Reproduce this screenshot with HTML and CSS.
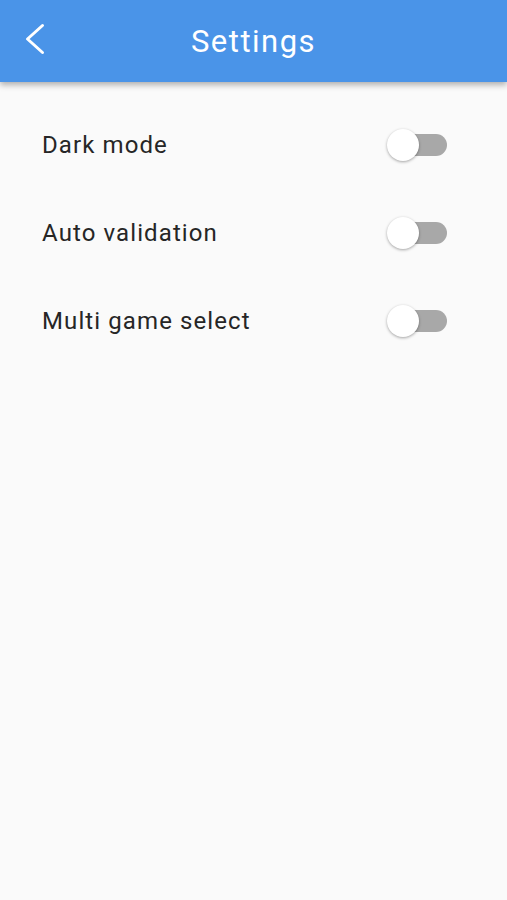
FILE: index.html
```html
<!DOCTYPE html>
<html lang="en">
<head>
    <meta charset="UTF-8">
    <meta name="viewport" content="width=device-width, initial-scale=1.0">
    <title>Settings</title>
    <link rel="stylesheet" href="styles.css">
</head>
<body>
    <div id="appBar">
        <button class="backBtn" aria-label="Back">
            <svg width="24" height="34" viewBox="0 0 24 34">
                <path d="M19.5 3.5 L4.5 17 L19.5 30.5" fill="none" stroke="#fff" stroke-width="3" stroke-linecap="round" stroke-linejoin="round"/>
            </svg>
        </button>
        <span class="title">Settings</span>
    </div>
    <div id="list">
        <div class="row">
            <span class="label">Dark mode</span>
            <span class="switch"><span class="track"></span><span class="thumb"></span></span>
        </div>
        <div class="row">
            <span class="label">Auto validation</span>
            <span class="switch"><span class="track"></span><span class="thumb"></span></span>
        </div>
        <div class="row">
            <span class="label">Multi game select</span>
            <span class="switch"><span class="track"></span><span class="thumb"></span></span>
        </div>
    </div>
</body>
</html>
```

FILE: styles.css
```css
body {
    margin: 0;
    background-color: #fafafa;
    font-family: Roboto, "Noto Sans", sans-serif;
}
#appBar {
    position: relative;
    height: 82px;
    background-color: #4a94e8;
    box-shadow: 0 3px 6px rgba(0, 0, 0, 0.3);
    display: flex;
    align-items: center;
    justify-content: center;
}
.backBtn {
    position: absolute;
    left: 23px;
    top: 22px;
    padding: 0;
    border: none;
    background: none;
    height: 34px;
}
.title {
    color: #fff;
    font-size: 31px;
    letter-spacing: 1.5px;
}
#list {
    padding: 19px 60px 0 42px;
}
.row {
    display: flex;
    align-items: center;
    justify-content: space-between;
    height: 88px;
}
.label {
    font-size: 24px;
    color: #262626;
    letter-spacing: 1.1px;
}
.switch {
    position: relative;
    width: 60px;
    height: 32px;
}
.track {
    position: absolute;
    left: 6px;
    right: 0;
    top: 5px;
    height: 22px;
    border-radius: 11px;
    background-color: #a8a8a8;
}
.thumb {
    position: absolute;
    left: 0;
    top: 0;
    width: 32px;
    height: 32px;
    border-radius: 50%;
    background-color: #fff;
    box-shadow: 0 1px 3px rgba(0, 0, 0, 0.35);
}
```
